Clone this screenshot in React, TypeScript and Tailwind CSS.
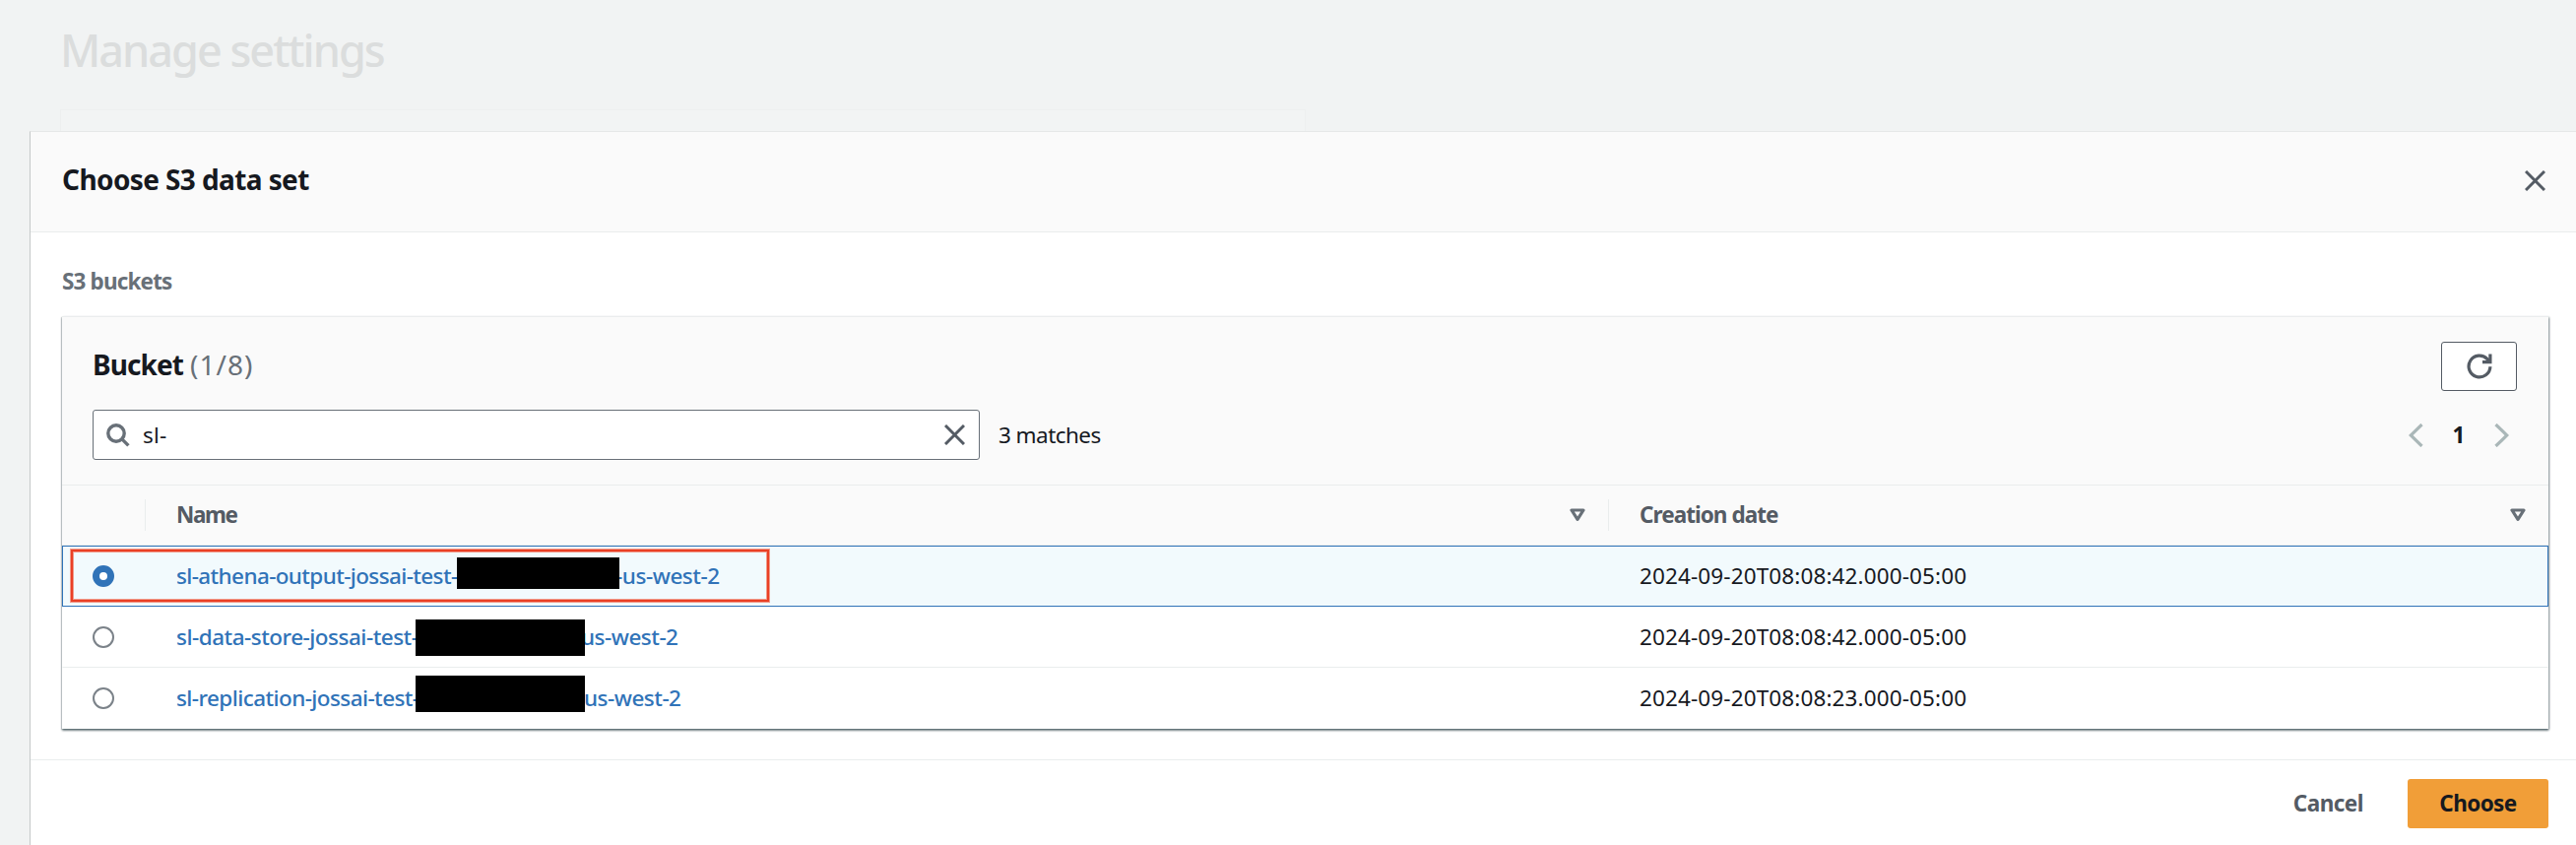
import type { ReactNode } from "react";

type Bucket = {
  prefix: string;
  prefixClass: string;
  suffix: string;
  suffixClass: string;
  maskClass: string;
  created: string;
  selected?: boolean;
};

const buckets: Bucket[] = [
  {
    prefix: "sl-athena-output-jossai-test-",
    prefixClass: "w-[449px] tracking-[-0.62px]",
    suffix: "-us-west-2",
    suffixClass: "ml-[-3px] tracking-[-0.45px]",
    maskClass: "left-[285px] top-[11px] h-[32px] w-[165px]",
    created: "2024-09-20T08:08:42.000-05:00",
    selected: true,
  },
  {
    prefix: "sl-data-store-jossai-test-",
    prefixClass: "w-[411px] tracking-[-0.5px]",
    suffix: "us-west-2",
    suffixClass: "tracking-[-0.5px]",
    maskClass: "left-[243px] top-[12px] h-[37px] w-[172px]",
    created: "2024-09-20T08:08:42.000-05:00",
  },
  {
    prefix: "sl-replication-jossai-test-",
    prefixClass: "w-[414px] tracking-[-0.58px]",
    suffix: "us-west-2",
    suffixClass: "tracking-[-0.5px]",
    maskClass: "left-[243px] top-[7px] h-[37px] w-[172px]",
    created: "2024-09-20T08:08:23.000-05:00",
  },
];

function CloseIcon() {
  return (
    <svg className="size-[21px]" viewBox="0 0 21 21" fill="none" stroke="#545b64" strokeWidth="3">
      <path d="M1 1l19 19M20 1L1 20" />
    </svg>
  );
}

function SortIcon() {
  return (
    <svg className="h-[14px] w-[16px]" viewBox="0 0 16 14" fill="none" stroke="#687078" strokeWidth="3.2" strokeLinejoin="round">
      <path d="M2 2h12L8 11.4z" />
    </svg>
  );
}

function Chevron({ d }: { d: string }) {
  return (
    <svg className="h-[24px] w-[15px]" viewBox="0 0 15 24" fill="none" stroke="#aab7b8" strokeWidth="3.2">
      <path d={d} />
    </svg>
  );
}

function Radio({ checked }: { checked?: boolean }) {
  return checked ? (
    <span className="size-[22px] rounded-full border-[7px] border-[#3073b8] bg-white" />
  ) : (
    <span className="size-[22px] rounded-full border-2 border-[#7b8289] bg-white" />
  );
}

function HeaderCell({ children, className }: { children: ReactNode; className: string }) {
  return (
    <div className={`flex h-[32px] items-center justify-between border-l border-[#eaeded] pl-[31px] font-bold text-[#545b64] ${className}`}>
      {children}
      <SortIcon />
    </div>
  );
}

function Row({ bucket }: { bucket: Bucket }) {
  const frame = bucket.selected
    ? "border border-[#3073b8] bg-[#f2fafd]"
    : "border-x border-b border-x-transparent border-b-[#eaeded] last:border-b-transparent pt-px";
  return (
    <div className={`relative flex h-[62px] items-center ${frame}`}>
      <div className="flex w-[115px] pl-[30px]">
        <Radio checked={bucket.selected} />
      </div>
      <div className="relative flex h-full w-[1486px] items-center font-medium text-[#3073b8]">
        <span className={bucket.prefixClass}>{bucket.prefix}</span>
        <span className={bucket.suffixClass}>{bucket.suffix}</span>
        <span className={`absolute bg-black ${bucket.maskClass}`} />
      </div>
      <span className="tracking-[0.12px]">{bucket.created}</span>
      {bucket.selected && (
        <span className="absolute left-[7px] top-[2px] h-[55px] w-[711px] border border-[#f09a8b]">
          <span className="block h-full border-2 border-[#ea4025]">
            <span className="block h-full border border-[#f09a8b]" />
          </span>
        </span>
      )}
    </div>
  );
}

export default function App() {
  return (
    <div className="flex h-[858px] w-[2616px] flex-col overflow-hidden whitespace-nowrap bg-[#f1f3f3] font-['Noto_Sans',sans-serif] text-[22.5px] leading-[30px] text-[#16191f]">
      <div className="h-[111px] pl-[61px] pt-[20px] text-[45px] font-medium leading-[61px] tracking-[-2px] text-[#dbdddd]">
        Manage settings
      </div>
      <div className="ml-[61px] h-[22px] w-[1265px] border-x border-t border-[#edefef] bg-[#f2f4f4]" />

      <div className="ml-[30px] flex flex-1 flex-col border-l border-t border-l-[#c5c9c9] border-t-[#e6e8e8] bg-white">
        <header className="flex h-[102px] items-center justify-between border-b border-[#eaeded] bg-[#fafafa] pl-[32px] pr-[31px]">
          <h2 className="pb-[5px] text-[28px] font-bold tracking-[-0.6px]">Choose S3 data set</h2>
          <span className="pb-[3px]">
            <CloseIcon />
          </span>
        </header>

        <main className="h-[536px] border-b border-[#eaeded] pl-[32px] pr-[28px] pt-[35px]">
          <div className="font-bold tracking-[-0.85px] text-[#687078]">S3 buckets</div>

          <section className="mt-[20px] h-[419px] border-t border-[#eaeded] bg-white shadow-[0_2px_2px_0_rgba(0,28,36,0.42),1px_1px_2px_0_rgba(0,28,36,0.38),-1px_1px_1px_0_rgba(0,28,36,0.14)]">
            <div className="h-[171px] border-b border-[#eaeded] bg-[#fafafa] pl-[31px] pr-[32px] pt-[25px]">
              <div className="flex h-[50px] items-center justify-between">
                <h3 className="pb-[4px] text-[28px] font-bold tracking-[-0.9px]">
                  Bucket<span className="ml-[7px] font-normal tracking-[1px] text-[#687078]">(1/8)</span>
                </h3>
                <button className="flex h-[50px] w-[77px] items-center justify-center rounded-[3px] border border-[#545b64] bg-white">
                  <svg className="size-[26px]" viewBox="0 0 26 26" fill="none" stroke="#545b64" strokeWidth="3.2">
                    <path d="M23.9 13.2A10.9 10.9 0 1 1 21 5.6L23 8" />
                    <path d="M23.9 .5v8.1H16" />
                  </svg>
                </button>
              </div>
              <div className="mt-[19px] flex h-[51px] items-center">
                <div className="flex h-[51px] w-[901px] items-center rounded-[3px] border border-[#687078] bg-white pl-[13px] pr-[14px]">
                  <svg className="size-[24px]" viewBox="0 0 24 24" fill="none" stroke="#687078" strokeWidth="3.4">
                    <circle cx="10" cy="10" r="8.2" />
                    <path d="M15.6 15.6l6.8 6.8" />
                  </svg>
                  <span className="ml-[13px] flex-1 tracking-[0.2px]">sl-</span>
                  <CloseIcon />
                </div>
                <span className="ml-[19px] flex-1 tracking-[-0.55px]">3 matches</span>
                <div className="flex items-center pr-[8px]">
                  <Chevron d="M13.5 1L2.2 12l11.3 11" />
                  <span className="w-[72px] text-center font-bold">1</span>
                  <Chevron d="M1.5 1l11.3 11L1.5 23" />
                </div>
              </div>
            </div>

            <div className="flex h-[61px] items-center border-b border-[#eaeded] bg-[#fafafa] pl-[84px]">
              <HeaderCell className="w-[1486px] pr-[23px]">
                <span className="tracking-[-1.4px]">Name</span>
              </HeaderCell>
              <HeaderCell className="flex-1 pr-[23px]">
                <span className="tracking-[-0.95px]">Creation date</span>
              </HeaderCell>
            </div>
            {buckets.map((bucket) => (
              <Row key={bucket.prefix} bucket={bucket} />
            ))}
          </section>
        </main>

        <footer className="flex items-center justify-end pr-[28px] pt-[19px] font-bold">
          <span className="mr-[45px] tracking-[-0.5px] text-[#545b64]">Cancel</span>
          <button className="h-[50px] w-[143px] rounded-[3px] bg-[#f19e38] tracking-[-0.6px]">Choose</button>
        </footer>
      </div>
    </div>
  );
}
